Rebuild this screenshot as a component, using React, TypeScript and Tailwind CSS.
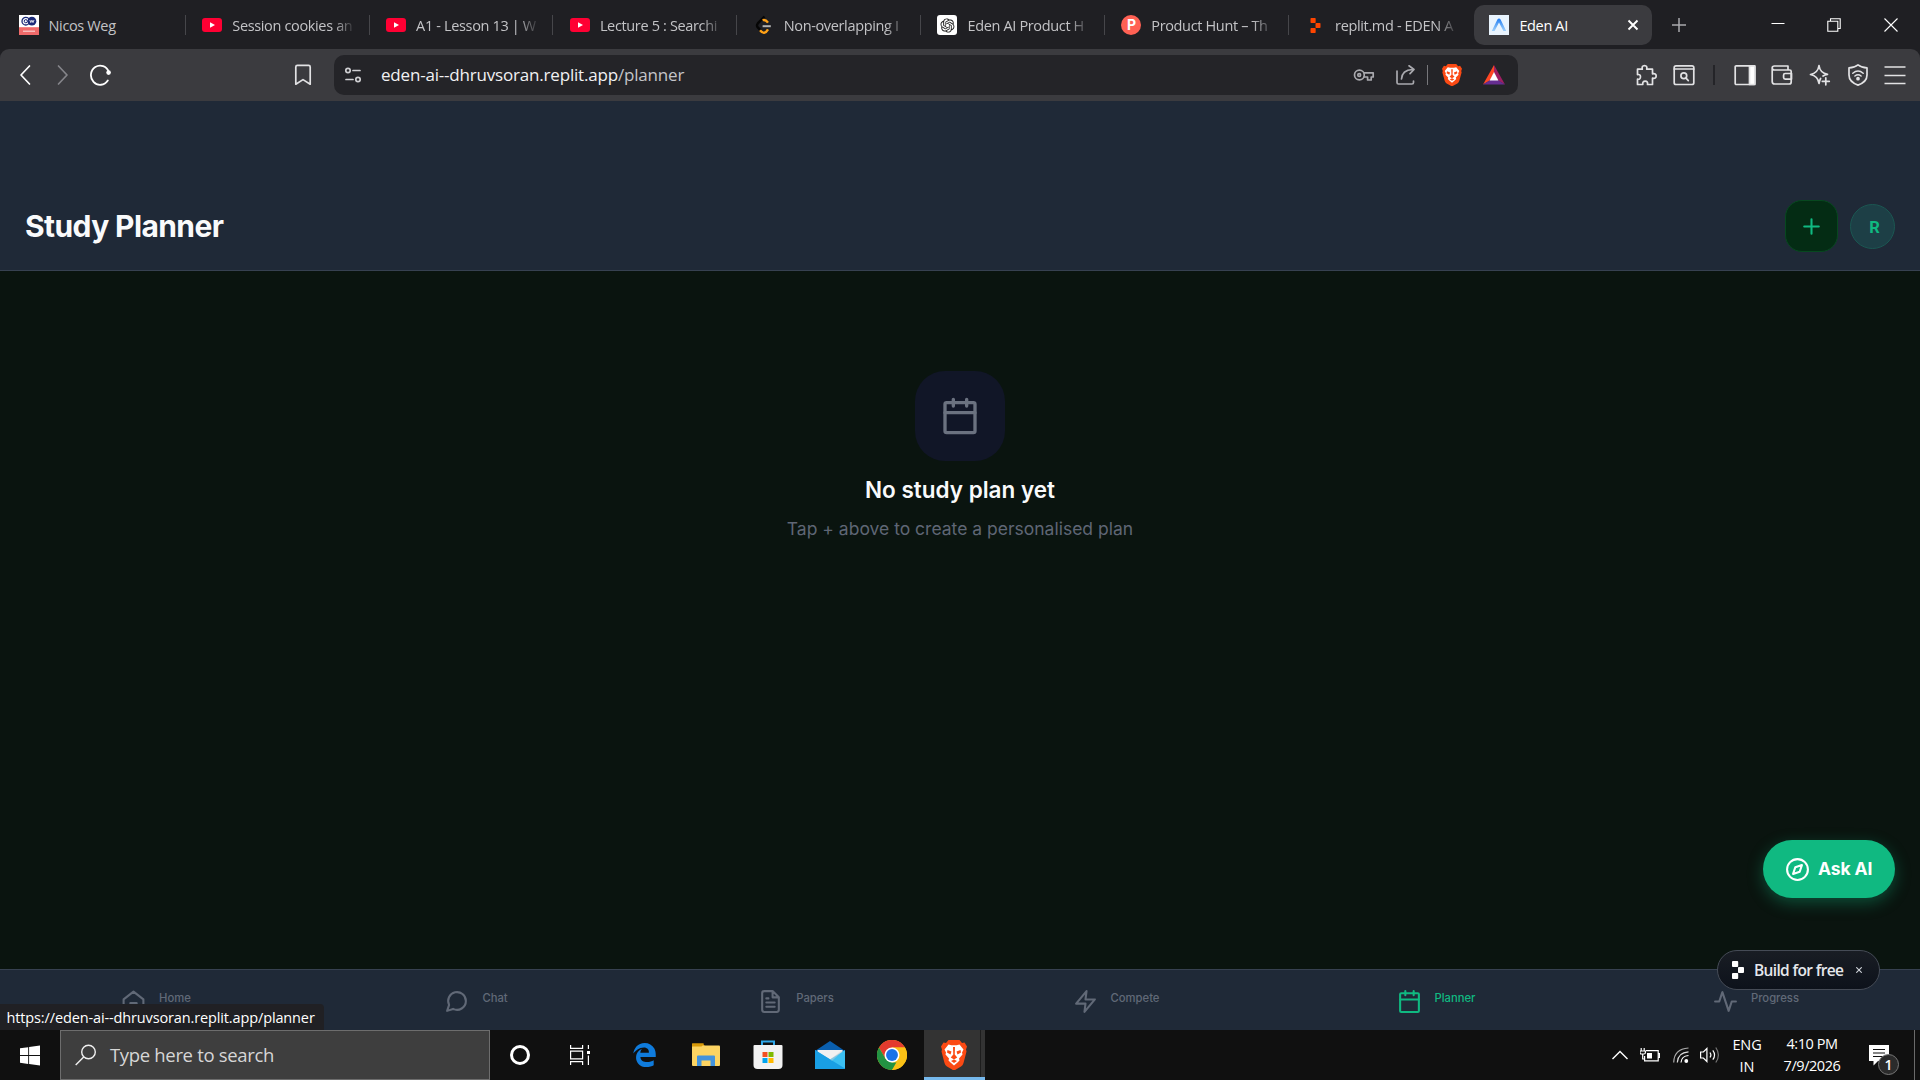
import { clsx } from "clsx";
import { ReactNode } from "react";
import { FaEdgeLegacy, FaWindows } from "react-icons/fa";
import { RiOpenaiFill } from "react-icons/ri";

const BraveLion = ({ className }: { className?: string }) => (
  <svg viewBox="0 0 52 60" className={clsx("shrink-0", className)} preserveAspectRatio="none">
    <path
      d="M15 0h22l5 6l5-1l5 8l-2 6l1 4l-6 23q-1 4-5 7l-11 6.500q-3 1.500-6 0L12 53q-4-3-5-7L1 23l1-4l-2-6l5-8l5 1z"
      fill="#fb4a14"
    />
    <path
      d="M15 9l6 1.500h10L37 9l8 10l-3 6l1 4l-7 8l1 4l-4 4l-7 6l-7-6l-4-4l1-4l-7-8l1-4l-3-6z"
      fill="#fff"
    />
    <path
      d="M13 20l8 3l-2 6l-7-4zM39 20l-8 3l2 6l7-4zM24 14h4l-.5 15l5 6l-6.500 4l-6.500-4l5-6zM20 42l6-3l6 3l-6 4z"
      fill="#fb4a14"
    />
  </svg>
);

const ReplitMark = ({ className }: { className?: string }) => (
  <svg viewBox="0 0 12 18" className={className} fill="currentColor">
    <rect x="0" y="0" width="6.2" height="6" rx="0.9" />
    <rect x="6" y="6" width="6" height="6" rx="0.9" />
    <rect x="0" y="12" width="6.2" height="6" rx="0.9" />
  </svg>
);

const YoutubeIcon = () => (
  <svg viewBox="0 0 20 20" className="h-5 w-5">
    <rect x="0" y="3" width="20" height="14" rx="3" fill="#ff0033" />
    <path d="M8 7.2v5.6l5-2.8z" fill="#fff" />
  </svg>
);

const NicosIcon = () => (
  <svg viewBox="0 0 20 20" className="h-5 w-5">
    <rect width="20" height="20" fill="#fff" />
    <rect y="12.2" width="20" height="7.8" fill="#ef6a6a" />
    <path d="M4 16.2h12" stroke="#fbd0cf" strokeWidth="1.2" />
    <circle cx="6.8" cy="6.2" r="3.8" fill="#fff" stroke="#1b2a78" strokeWidth="1.3" />
    <circle cx="6.8" cy="6.2" r="1.6" fill="none" stroke="#1b2a78" strokeWidth="1" />
    <circle cx="12.9" cy="6.2" r="4.4" fill="#1b2a78" />
    <path d="M10.8 5l1 2.6 1.1-2.4 1.1 2.4 1-2.6" fill="none" stroke="#fff" strokeWidth="0.8" />
  </svg>
);

const LeetIcon = () => (
  <svg viewBox="0 0 20 20" className="h-5 w-5" fill="none" strokeWidth="2.4">
    <path d="M10.500 1.500L3.800 8.400Q2.200 10.400 3.800 12.400L6.600 15.300" stroke="#050505" />
    <path d="M8.600 5.200Q11.500 4.200 14 7.600" stroke="#ffa116" />
    <path d="M6 15.200Q10.400 20.800 14 14.400" stroke="#ffa116" />
    <path d="M8.600 11.200h8.200" stroke="#b3b3b3" strokeWidth="2" />
  </svg>
);

const ChatGptIcon = () => (
  <span className="flex h-5 w-5 items-center justify-center rounded-[3px] bg-white">
    <RiOpenaiFill className="h-[17px] w-[17px] text-[#222]" />
  </span>
);

const ProductHuntIcon = () => (
  <span className="flex h-5 w-5 items-center justify-center rounded-full bg-[#ff6154] font-['Inter',sans-serif] text-[14px] leading-none font-bold text-white">
    P
  </span>
);

const EdenIcon = () => (
  <svg viewBox="0 0 20 20" className="h-5 w-5 shrink-0">
    <defs>
      <linearGradient id="eden" x1="0" y1="0" x2="0" y2="1">
        <stop offset="0" stopColor="#1f7cf2" />
        <stop offset="1" stopColor="#9fd0fb" />
      </linearGradient>
    </defs>
    <rect width="20" height="20" fill="#e9f4fe" />
    <path d="M2.8 16L8.4 4.4Q10 2.4 11.6 4.4L17.2 16H14.4L10 7.6L5.6 16Z" fill="url(#eden)" />
  </svg>
);

const tabs: { title: string; icon: ReactNode }[] = [
  { title: "Nicos Weg", icon: <NicosIcon /> },
  { title: "Session cookies an", icon: <YoutubeIcon /> },
  { title: "A1 - Lesson 13 | W", icon: <YoutubeIcon /> },
  { title: "Lecture 5 : Searchi", icon: <YoutubeIcon /> },
  { title: "Non-overlapping I", icon: <LeetIcon /> },
  { title: "Eden AI Product H", icon: <ChatGptIcon /> },
  { title: "Product Hunt – Th", icon: <ProductHuntIcon /> },
  { title: "replit.md - EDEN A", icon: <ReplitMark className="h-[15px] w-[11px] text-[#ff4500]" /> },
];

function TabStrip() {
  return (
    <div className="flex h-[49px] items-center pt-[1px] pl-[2px] text-[14.5px] tracking-[-0.35px] text-[#c3c3c6]">
      {tabs.map((tab, i) => (
        <div
          key={tab.title}
          className={clsx(
            "flex h-5 w-[183.8px] items-center border-r pl-[16.500px]",
            i === tabs.length - 1 ? "border-transparent" : "border-[#46464a]"
          )}
        >
          <span className="flex w-5 justify-center">{tab.icon}</span>
          <span
            className={clsx(
              "ml-[10px] w-[124px] pt-[1px] leading-6 whitespace-nowrap",
              i > 0 && "mask-r-from-82% mask-r-to-100%"
            )}
          >
            {tab.title}
          </span>
        </div>
      ))}
      <div className="ml-[2px] flex h-10 w-[178px] items-center rounded-[10px] bg-[#3b3b3f] pr-[13px] pl-[15px] text-white">
        <EdenIcon />
        <span className="ml-[10px] flex-1 pt-[1px]">Eden AI</span>
        <svg viewBox="0 0 12 12" className="h-3 w-3" stroke="#fff" strokeWidth="1.9">
          <path d="M1.5 1.5l9 9M10.5 1.5l-9 9" />
        </svg>
      </div>
      <svg viewBox="0 0 14 14" className="ml-[20px] h-[14px] w-[14px]" stroke="#a9a9ad" strokeWidth="1.5">
        <path d="M7 0v14M0 7h14" />
      </svg>
      <div className="ml-auto flex items-center pr-[22px]">
        <svg viewBox="0 0 14 14" className="h-[14px] w-[14px]" stroke="#fff" strokeWidth="1">
          <path d="M0.5 5.5h13" />
        </svg>
        <svg viewBox="0 0 14 14" className="ml-[42px] h-[14px] w-[14px]" fill="none" stroke="#fff" strokeWidth="1.1">
          <path d="M0.8 3.2h10v10h-10zM3.5 3V0.8h9.7v9.7H11" />
        </svg>
        <svg viewBox="0 0 14 14" className="ml-[43px] h-[14px] w-[14px]" stroke="#fff" strokeWidth="1.1">
          <path d="M0.5 0.5l13 13M13.5 0.5l-13 13" />
        </svg>
      </div>
    </div>
  );
}

interface GlyphProps {
  children: ReactNode;
  className?: string;
}

// 22px toolbar glyph, drawn on its own pixel grid
const Glyph = ({ children, className }: GlyphProps) => (
  <svg
    viewBox="0 0 22 22"
    className={clsx("h-[22px] w-[22px] shrink-0", className)}
    fill="none"
    stroke="currentColor"
    strokeWidth="1.7"
    strokeLinecap="round"
    strokeLinejoin="round"
  >
    {children}
  </svg>
);

function Toolbar() {
  return (
    <div className="flex h-[52px] items-center rounded-t-[9px] bg-[#3b3b3f] pb-[1px] pl-[14px] text-[#e2e2e4]">
      <Glyph className="text-white"><path d="M15.500 2L7 11L15.500 20" /></Glyph>
      <Glyph className="ml-[15px] text-[#85858a]"><path d="M7.5 2L16 11L7.5 20" /></Glyph>
      <Glyph className="ml-[16px] text-white">
        <path d="M18.800 16.500A9.2 9.6 0 1 1 19.8 8" strokeWidth="1.8" />
        <circle cx="19.600" cy="8.600" r="2.300" fill="currentColor" stroke="none" />
      </Glyph>
      <Glyph className="ml-[181px]"><path d="M3.800 3q0-1.600 1.600-1.600h11.200q1.600 0 1.600 1.600v17.200L11 15.600L3.800 20.200z" /></Glyph>

      <div className="ml-[20px] flex h-10 w-[1184px] items-center rounded-[10px] bg-[#242428]">
        <Glyph className="ml-[8px] text-[#cfcfd2]">
          <circle cx="6" cy="6.5" r="2.2" />
          <path d="M11 6.5h7M4 15.5h7" />
          <circle cx="16" cy="15.5" r="2.2" />
        </Glyph>
        <span className="ml-[17px] text-[17px] tracking-[-0.19px] text-[#f1f1f3]">
          eden-ai--dhruvsoran.replit.app<span className="text-[#c4c4c8]">/planner</span>
        </span>
        <div className="ml-auto flex items-center pr-[13px] text-[#a9a9ae]">
          <Glyph>
            <circle cx="6.4" cy="11" r="4.9" />
            <circle cx="6.2" cy="11" r="1.4" />
            <path d="M11 8.8h9.2v4.2h-2v3h-3.6v-3H11" />
          </Glyph>
          <Glyph className="ml-[20px]">
            <path d="M2 7v11.5q0 1.5 1.5 1.5h13.500q1.500 0 1.500-1.500v-1.500" />
            <path d="M6.500 15q.5-9 11-9.500M14 1.800l5 3.700l-4 4.200" />
          </Glyph>
          <span className="ml-[10px] h-5 w-px bg-[#77777b]" />
          <BraveLion className="ml-[14px] h-[22px] w-5" />
          <svg viewBox="0 0 22 20" className="ml-[21px] h-5 w-[22px]">
            <path d="M11 0L0 19.500L7.200 15.200L11 7.500z" fill="#ff4724" />
            <path d="M11 0L22 19.500L14.800 15.200L11 7.500z" fill="#9e1f63" />
            <path d="M0 19.500h22L14.800 15H7.200z" fill="#662d91" />
            <path d="M11 7L6.600 15.500h8.800z" fill="#fff" />
          </svg>
        </div>
      </div>

      <div className="ml-auto flex items-center pr-[14px]">
        <Glyph className="w-[23px]">
          <path d="M2 5.200h4.800q-.8-3.600 2.200-3.700q3 .1 2.200 3.700H17v4.600q3.600-.8 3.700 2.200q-.1 3-3.700 2.200v6.300h-5q.6-3.300-2.300-3.300q-2.900 0-2.400 3.300H2v-5.300q3 .4 3-2.400q0-2.700-3-2.200z" />
        </Glyph>
        <Glyph className="ml-[15px]">
          <rect x="1.200" y="1.800" width="19.600" height="18.700" rx="1.800" />
          <path d="M1.200 5h19.600" />
          <circle cx="10.800" cy="11.800" r="2.900" />
          <path d="M13 14.200l2.300 2.400" />
        </Glyph>
        <span className="ml-[18px] h-5 w-[2px] bg-[#242428]" />
        <Glyph className="ml-[19px]">
          <rect x="1.200" y="1.800" width="19.600" height="18.700" rx="1" />
          <path d="M15.500 1.800h5.300v18.700h-5.300z" fill="#fff" />
        </Glyph>
        <Glyph className="ml-[15px]">
          <path d="M1.200 4v13.500q0 2.500 2.500 2.500h14.500q2 0 2-2V7.500q0-1.500-1.500-1.500H3.400Q1.200 6 1.200 4t2.200-2H17v4" />
          <path d="M20.500 9.500h-6.300q-1.600 0-1.600 1.600v2.400q0 1.600 1.600 1.600h6.300z" />
        </Glyph>
        <Glyph className="ml-[16px]">
          <path d="M10 1.500q1 7.500 8.500 8.800q-2.500.4-4.500 1.700M10 1.500Q9 9 1.500 10.500Q9 12 10 19.500q.5-3 1.600-5" />
          <path d="M16.800 13.800v7M13.300 17.300h7" />
        </Glyph>
        <Glyph className="ml-[16px]">
          <path d="M11 .9q3.500 2.800 9 3v7.200q0 7-9 10q-9-3-9-10V3.900q5.500-.2 9-3z" />
          <path d="M5.800 9.200q5.200-4.400 10.400 0M7.900 12q3.100-2.500 6.200 0" strokeWidth="1.500" />
          <circle cx="11" cy="14.700" r="1" fill="currentColor" />
        </Glyph>
        <Glyph className="ml-[15px]"><path d="M0.500 3h21M0.500 11.500h21M0.500 19.500h21" strokeLinecap="butt" strokeWidth="1.500" /></Glyph>
      </div>
    </div>
  );
}

function Feather({ children, className }: GlyphProps) {
  return (
    <svg
      viewBox="0 0 24 24"
      className={clsx("shrink-0", className)}
      fill="none"
      stroke="currentColor"
      strokeWidth="2"
      strokeLinecap="round"
      strokeLinejoin="round"
    >
      {children}
    </svg>
  );
}

const calendarPath = (
  <>
    <rect x="3" y="4" width="18" height="18" rx="1" />
    <path d="M16 2v4M8 2v4M3 10h18" />
  </>
);

const navItems = [
  {
    label: "Home",
    icon: <path d="M2.500 10L12 2.500L21.500 10v11q0 1-1 1h-17q-1 0-1-1zM9 22V13.500h6V22" />,
  },
  {
    label: "Chat",
    icon: <path d="M21 11.500a8.500 8.500 0 0 1-12.300 7.600L3 21l1.900-5.700A8.500 8.500 0 1 1 21 11.500z" />,
  },
  {
    label: "Papers",
    icon: <path d="M14 2H6a2 2 0 0 0-2 2v16a2 2 0 0 0 2 2h12a2 2 0 0 0 2-2V8zM14 2v6h6M16 13H8M16 17H8M10 9H8" />,
  },
  { label: "Compete", icon: <path d="M13 2L3 14h9l-1 8l10-12h-9z" /> },
  { label: "Planner", icon: calendarPath, active: true },
  { label: "Progress", icon: <path d="M22 12h-4l-3 9L9 3l-3 9H2" /> },
];

function Planner() {
  return (
    <main className="relative flex h-[929px] flex-col bg-[#0a140f] font-['Inter',sans-serif]">
      <header className="flex h-[170px] items-end justify-between border-b border-[#374151] bg-[#1f2937] px-[25px] pb-[18px]">
        <h1 className="pb-[8px] text-[30px] leading-9 font-bold tracking-[-0.6px] text-[#f9fafb]">Study Planner</h1>
        <div className="flex items-center gap-3">
          <button className="flex h-[52px] w-[53px] items-center justify-center rounded-[17px] border border-[#07481f] bg-[#042c14] text-[#10b981]">
            <Feather className="h-[25px] w-[25px]"><path d="M12 5v14M5 12h14" /></Feather>
          </button>
          <div className="flex h-[45px] w-[45px] items-center justify-center rounded-full border-[1.500px] border-[#1b5752] bg-[#1d3f46] pt-[5px] pl-[4px] font-['Roboto',sans-serif] text-[16.500px] font-bold text-[#10b981]">
            R
          </div>
        </div>
      </header>

      <section className="flex flex-1 flex-col items-center pt-[99px]">
        <div className="mt-[1px] flex h-[90px] w-[90px] items-center justify-center rounded-[30px] bg-[#111627] text-[#6b7280]">
          <Feather className="h-10 w-10">{calendarPath}</Feather>
        </div>
        <h2 className="mt-[15px] text-[22.500px] leading-[28px] font-semibold text-[#f9fafb]">No study plan yet</h2>
        <p className="mt-[12px] text-[17.500px] leading-[26px] text-[#5f6675]">Tap + above to create a personalised plan</p>
      </section>

      <nav className="grid h-[61px] grid-cols-6 border-t border-[#374151] bg-[#1f2937]">
        {navItems.map((item) => (
          <div
            key={item.label}
            className={clsx(
              "flex items-start justify-center gap-[13px] pt-[19px] pr-2",
              item.active ? "text-[#10b981]" : "text-[#616977]"
            )}
          >
            <Feather className="h-[25px] w-[25px]">{item.icon}</Feather>
            <span className="pt-[1.500px] text-[11.250px] leading-[14px] font-medium">{item.label}</span>
          </div>
        ))}
      </nav>

      <button className="absolute top-[739px] right-[25px] flex h-[58px] w-[132px] items-center rounded-full bg-[#10b981] pl-[22px] text-white shadow-[0_5px_16px_rgba(16,185,129,0.350)]">
        <Feather className="h-[25px] w-[25px]">
          <circle cx="12" cy="12" r="10" />
          <path d="M16.240 7.760l-2.120 6.360l-6.360 2.120l2.120-6.360z" />
        </Feather>
        <span className="ml-[8px] text-[17.500px] font-bold tracking-[-0.100px] whitespace-nowrap">Ask AI</span>
      </button>

      <div className="absolute top-[849px] left-[1717px] flex h-10 w-[163px] items-center rounded-full border border-[#454b56] bg-linear-to-b from-[#191d24] to-[#0d121b] pl-[14px] font-['Open_Sans',sans-serif] text-[#e5e7eb]">
        <ReplitMark className="h-[18px] w-3 text-white" />
        <span className="ml-[10px] pt-[1px] text-[15.500px] font-semibold tracking-[-0.650px] whitespace-nowrap">Build for free</span>
        <svg viewBox="0 0 6 6" className="ml-[13px] h-[6px] w-[6px]" stroke="#d1d5db" strokeWidth="1.100">
          <path d="M0.300 0.300l5.400 5.400M5.700 0.300L0.300 5.700" />
        </svg>
      </div>

      <div className="absolute bottom-0 left-0 flex h-[26px] w-[324px] items-center rounded-tr-[4px] bg-[#202024] pt-[1px] pl-[6.500px] font-['Open_Sans',sans-serif] text-[14.500px] tracking-[-0.130px] whitespace-nowrap text-white">
        https://eden-ai--dhruvsoran.replit.app/planner
      </div>
    </main>
  );
}

function Taskbar() {
  return (
    <footer className="flex h-[50px] items-center bg-[#101010] text-white">
      <div className="flex w-[60px] justify-center"><FaWindows className="h-[23px] w-[20px]" /></div>
      <div className="flex h-[50px] w-[430px] items-center border border-[#6d6d6d] bg-[#3e3e3e] pl-[14px]">
        <svg viewBox="0 0 22 22" className="h-[22px] w-[22px]" fill="none" stroke="#f0f0f0" strokeWidth="1.400">
          <circle cx="13.500" cy="8" r="6.800" />
          <path d="M8.700 12.900L0.700 21" />
        </svg>
        <span className="ml-[13px] text-[18.500px] tracking-[-0.330px] text-[#d6d6d6]">Type here to search</span>
      </div>
      <div className="flex h-full items-center">
        <div className="flex w-[60px] justify-center">
          <div className="h-[20px] w-[20px] rounded-full border-[3px] border-white" />
        </div>
        <div className="flex w-[60px] justify-center">
          <svg viewBox="0 0 20 20" className="h-5 w-5" fill="none" stroke="#fff" strokeWidth="1.200">
            <path d="M0.600 0v3.400h12V0M0.600 20v-3.400h12V20M0.600 6.200h12v7.600h-12zM18.400 0v4M18.400 10.500V20" />
            <path d="M17 6h3v3h-3z" fill="#fff" stroke="none" />
          </svg>
        </div>
        <div className="flex w-[68px] justify-center"><FaEdgeLegacy className="h-[26px] w-[25px] text-[#0f7bdc]" /></div>
        <div className="flex w-[56px] justify-center">
          <svg viewBox="0 0 28 24" className="h-6 w-7">
            <path d="M0 1.500Q0 .5 1 .5h10l2.500 3.500H0z" fill="#d89a09" />
            <rect y="2.500" width="28" height="20.500" rx="1" fill="#fcd462" />
            <path d="M0 .5h12l-2.500 3H0z" fill="#d89a09" />
            <path d="M5 13.500q0-1 1-1h16q1 0 1 1V23h-4.500v-5.500h-9V23H5z" fill="#4393dc" />
          </svg>
        </div>
        <div className="flex w-[67px] justify-center">
          <svg viewBox="0 0 30 30" className="h-[30px] w-[30px]">
            <path d="M9 6V1.500h12V6" fill="none" stroke="#2fa8ea" strokeWidth="2" />
            <path d="M.5 6q0-1 1-1h27q1 0 1 1v19q0 4-4 4h-21q-4 0-4-4z" fill="#f2f2f2" />
            <rect x="9.500" y="12" width="5" height="5" fill="#f25022" />
            <rect x="15.500" y="12" width="5" height="5" fill="#7fba00" />
            <rect x="9.500" y="18" width="5" height="5" fill="#00a4ef" />
            <rect x="15.500" y="18" width="5" height="5" fill="#ffb900" />
          </svg>
        </div>
        <div className="flex w-[58px] justify-center">
          <svg viewBox="0 0 30 28" className="h-7 w-[30px]">
            <path d="M0 10L15 0l15 10v17q0 1-1 1H1q-1 0-1-1z" fill="#0a5fae" />
            <path d="M2.500 9h25v12h-25z" fill="#f1f1f1" />
            <path d="M0 9l15 9.500L30 9v18q0 1-1 1H1q-1 0-1-1z" fill="#3cc0f2" />
            <path d="M0 9l30 18.500q-.5.500-1 .5H1q-1 0-1-1z" fill="#199fe4" />
            <path d="M15 18.500l2 1.300L27.500 10.500V9z" fill="#c9cdd2" opacity="0.500" />
          </svg>
        </div>
        <div className="flex w-[65px] justify-center pl-[1px]">
          <svg viewBox="0 0 48 48" className="h-[30px] w-[30px]">
            <circle cx="24" cy="24" r="24" fill="#fbc116" />
            <path d="M24 12h20.800A24 24 0 0 0 3.200 12l10.400 18z" fill="#e33b2e" />
            <path d="M3.200 12L13.600 30L24 36h10.400L24 48A24 24 0 0 1 3.200 12z" fill="#229342" />
            <path d="M34.400 30L24 48A24 24 0 0 0 44.800 12H24z" fill="#fbc116" />
            <circle cx="24" cy="24" r="12" fill="#fff" />
            <circle cx="24" cy="24" r="9.500" fill="#1a73e8" />
          </svg>
        </div>
        <div className="flex h-full w-[61px] border-b-[3px] border-[#76b9ed] bg-[#333]">
          <div className="flex w-[57px] items-center justify-center border-r border-[#1d1d1d] pt-[3px] pl-[3px]">
            <BraveLion className="h-[30px] w-[26px]" />
          </div>
        </div>
      </div>

      <div className="ml-auto flex h-full items-center">
        <svg viewBox="0 0 16 10" className="h-[10px] w-4" fill="none" stroke="#fff" strokeWidth="1.400">
          <path d="M0.500 9L8 1.500L15.500 9" />
        </svg>
        <svg viewBox="0 0 20 14" className="ml-[12px] h-[14px] w-5" fill="none" stroke="#fff" strokeWidth="1.200">
          <path d="M6 2.600h12.200v10.200H4.600V8M18.200 5.500h1.300v4h-1.300" />
          <path d="M7 5h5v5.500H7z" fill="#fff" stroke="none" />
          <path d="M1.200 0v3M4.200 0v3M0 3h5.400v1.500q0 1.500-1.500 1.500H1.500Q0 6 0 4.500zM2.700 6v5h2" />
        </svg>
        <svg viewBox="0 0 16 16" className="ml-[13px] h-4 w-4" fill="none" strokeWidth="1.200">
          <path d="M.7 15.500Q1 2 15.500 1" stroke="#aaa" />
          <path d="M4.300 15.500Q4.800 5.500 15.500 4.800" stroke="#ddd" />
          <path d="M8 15.500Q8.500 9 15.500 8.500" stroke="#fff" />
          <circle cx="13.300" cy="14" r="1.900" fill="#fff" />
        </svg>
        <svg viewBox="0 0 20 18" className="ml-[11px] h-[18px] w-5" fill="none" stroke="#fff" strokeWidth="1.200">
          <path d="M.6 6h2.800l3.500-3.500v13L3.400 12H.6z" />
          <path d="M10 6.500q1.800 2.500 0 5M12.800 4.300q3.500 4.700 0 9.400" />
          <path d="M15.800 1.500q5.200 7.500 0 15" stroke="#777" />
        </svg>
        <div className="ml-[12px] flex w-[30px] flex-col items-center pt-[1px] text-[14.500px] leading-[22px] tracking-[-0.100px]">
          <span>ENG</span>
          <span>IN</span>
        </div>
        <div className="ml-[17px] flex w-[66px] flex-col items-center text-[14.500px] leading-[22px] tracking-[-0.450px] whitespace-nowrap">
          <span>4:10 PM</span>
          <span>7/9/2026</span>
        </div>
        <div className="relative ml-[24px] h-[22px] w-5">
          <svg viewBox="0 0 20 22" className="h-[22px] w-5">
            <path d="M0 1h20v16H9l-4.500 4.500V17H0z" fill="#fff" />
            <path d="M4 5.500h12M4 9h12M4 12.500h12" stroke="#101010" strokeWidth="1.200" />
          </svg>
          <span className="absolute top-[10px] left-[9px] flex h-[21px] w-[21px] items-center justify-center rounded-full border border-[#777] bg-[#2b2b2b] text-[14px] leading-none font-semibold">
            1
          </span>
        </div>
        <span className="ml-[25px] h-full w-px bg-[#6a6a6a]" />
        <span className="w-[5px]" />
      </div>
    </footer>
  );
}

export default function App() {
  return (
    <div className="flex h-[1080px] w-[1920px] flex-col overflow-hidden bg-[#1f1f23] font-['Open_Sans','Noto_Sans',sans-serif]">
      <TabStrip />
      <Toolbar />
      <Planner />
      <Taskbar />
    </div>
  );
}
